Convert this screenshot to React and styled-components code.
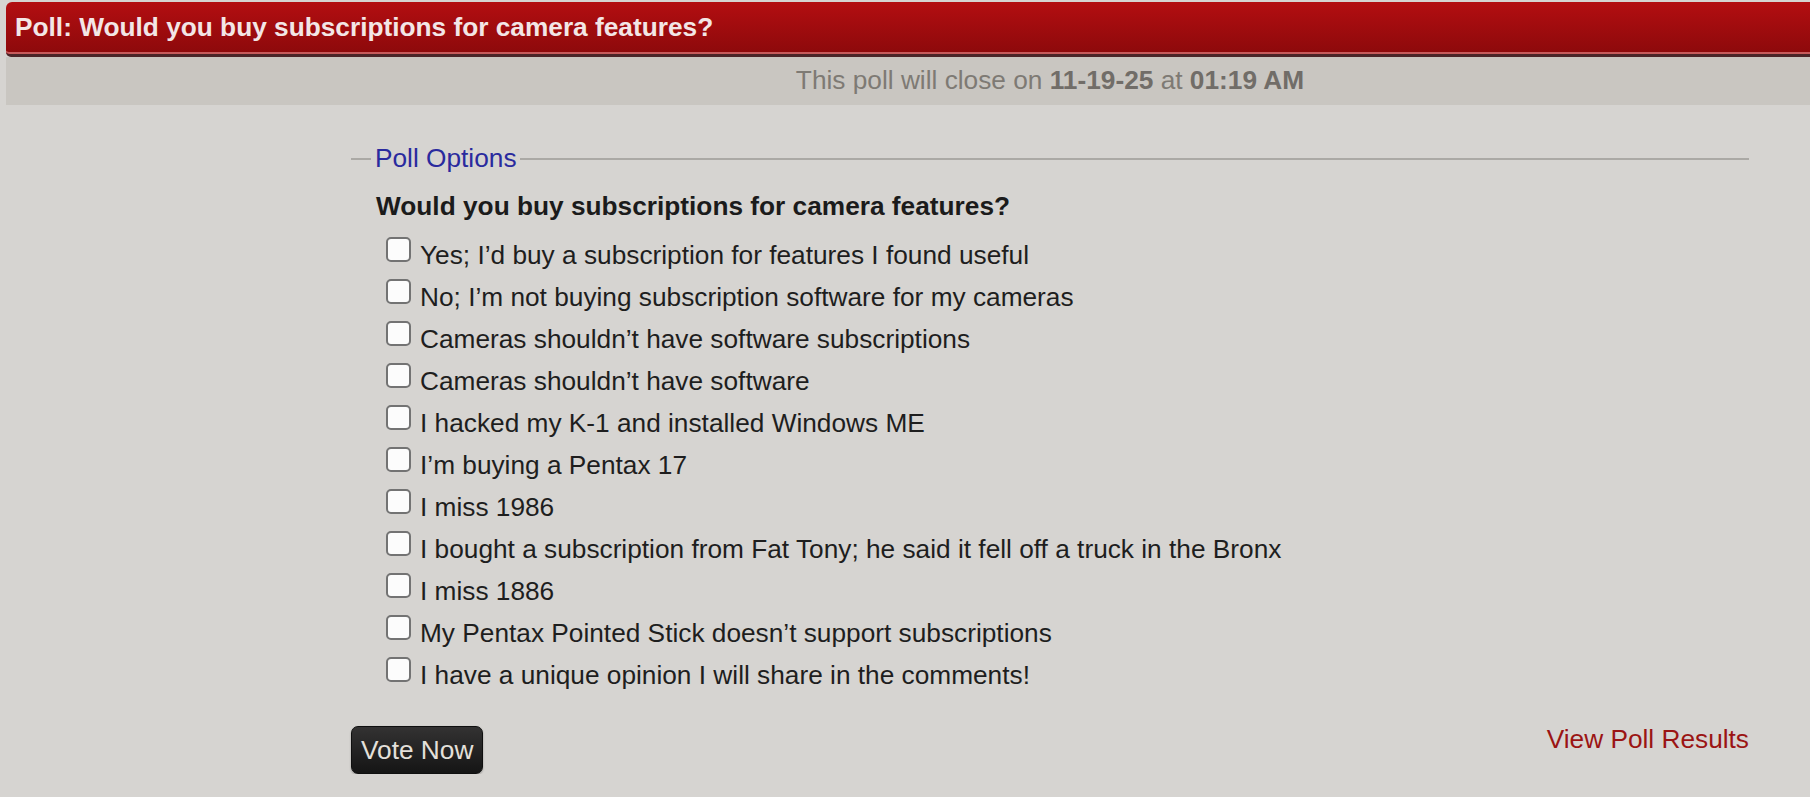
import React from 'react';
import styled, { createGlobalStyle } from 'styled-components';

const GlobalStyle = createGlobalStyle`
  html, body {
    margin: 0;
    padding: 0;
    background: #d6d4d1;
    overflow: hidden;
  }
  body {
    font-family: "Liberation Sans", Arial, sans-serif;
  }
`;

const Page = styled.div`
  width: 2088px;
  margin-left: 6px;
  padding-top: 2px;
`;

const TitleBar = styled.div`
  height: 50px;
  padding: 0 0 2px 9px;
  display: flex;
  align-items: center;
  background: linear-gradient(#b30e11, #8c090b);
  border-radius: 6px 6px 0 5px;
  box-shadow: inset 0 -2px 0 #c65b5c;
  border-bottom: 3px solid #4a2528;
  color: #f3e6e6;
  font-size: 26.25px;
  font-weight: 700;
`;

const SubBar = styled.div`
  height: 48px;
  line-height: 46px;
  padding-bottom: 2px;
  box-sizing: border-box;
  background: #c9c6c1;
  text-align: center;
  color: #7e7a74;
  font-size: 26.25px;
`;

const Strong = styled.strong`
  color: #716d68;
  font-weight: 700;
`;

const Content = styled.div`
  padding: 39px 345px 0 345px;
`;

const Fieldset = styled.fieldset`
  margin: 0;
  padding: 12px 0 0 0;
  border: none;
  border-top: 2px solid #aba9a5;
  min-width: 0;
`;

const Legend = styled.legend`
  margin-left: 20px;
  padding: 0 3px 0 4px;
  font-size: 26.25px;
  line-height: 29px;
  color: #2a2a9e;
`;

const Question = styled.div`
  margin: 0 0 7px 25px;
  font-size: 26.25px;
  font-weight: 700;
  line-height: 42px;
  color: #1b1b1b;
`;

const Options = styled.div`
  display: flex;
  flex-direction: column;
  padding-left: 35px;
`;

const OptionRow = styled.label`
  display: flex;
  align-items: flex-start;
  gap: 9px;
  font-size: 26.25px;
  line-height: 42px;
  color: #1e1e1e;
  cursor: pointer;
`;

const Checkbox = styled.input.attrs({ type: 'checkbox' })`
  appearance: none;
  -webkit-appearance: none;
  flex: none;
  width: 25px;
  height: 25px;
  margin: 3px 0 0 0;
  box-sizing: border-box;
  border: 2px solid #737373;
  border-radius: 5px;
  background: #fcfcfc;
  &:checked {
    background: #1a1a1a;
  }
`;

const Footer = styled.div`
  display: flex;
  justify-content: space-between;
  align-items: flex-start;
  margin-top: 30px;
`;

const VoteButton = styled.button`
  height: 48px;
  padding: 0 9px;
  font-family: "Liberation Sans", Arial, sans-serif;
  font-size: 26.25px;
  color: #e4e0da;
  background: linear-gradient(#333232, #151515);
  border: 1px solid #0f0f0f;
  border-radius: 7px;
  box-shadow: 0 1px 2px rgba(0, 0, 0, 0.3);
  cursor: pointer;
`;

const ResultsLink = styled.a`
  margin-top: -2px;
  font-size: 26.25px;
  line-height: 30px;
  color: #9b1414;
  text-decoration: none;
`;

const options = [
  'Yes; I\u2019d buy a subscription for features I found useful',
  'No; I\u2019m not buying subscription software for my cameras',
  'Cameras shouldn\u2019t have software subscriptions',
  'Cameras shouldn\u2019t have software',
  'I hacked my K-1 and installed Windows ME',
  'I\u2019m buying a Pentax 17',
  'I miss 1986',
  'I bought a subscription from Fat Tony; he said it fell off a truck in the Bronx',
  'I miss 1886',
  'My Pentax Pointed Stick doesn\u2019t support subscriptions',
  'I have a unique opinion I will share in the comments!',
];

export default function App() {
  return (
    <>
      <GlobalStyle />
      <Page>
        <TitleBar>Poll: Would you buy subscriptions for camera features?</TitleBar>
        <SubBar>
          This poll will close on <Strong>11-19-25</Strong> at <Strong>01:19 AM</Strong>
        </SubBar>
        <Content>
          <Fieldset>
            <Legend>Poll Options</Legend>
            <Question>Would you buy subscriptions for camera features?</Question>
            <Options>
              {options.map((o) => (
                <OptionRow key={o}>
                  <Checkbox />
                  <span>{o}</span>
                </OptionRow>
              ))}
            </Options>
          </Fieldset>
          <Footer>
            <VoteButton>Vote Now</VoteButton>
            <ResultsLink href="#">View Poll Results</ResultsLink>
          </Footer>
        </Content>
      </Page>
    </>
  );
}
